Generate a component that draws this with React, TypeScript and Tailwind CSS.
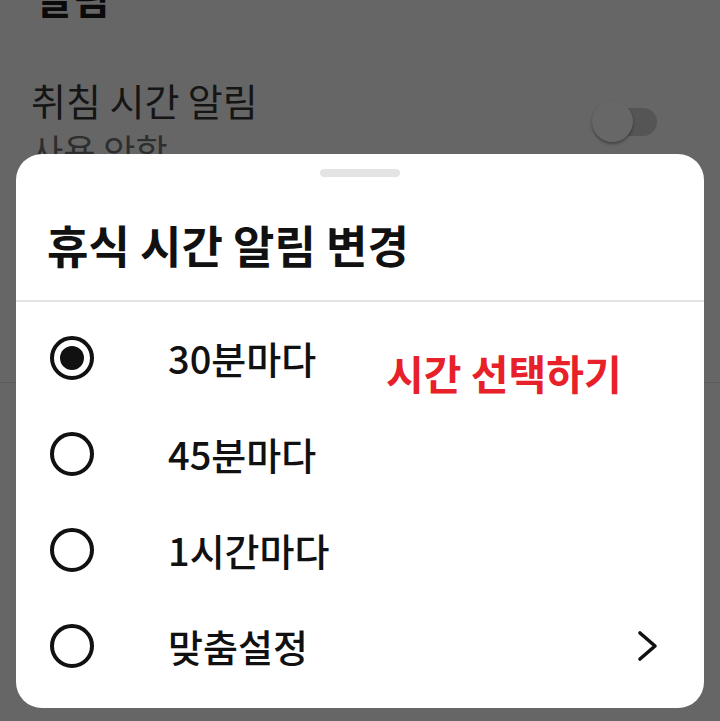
const options = [
  { label: "30분마다", checked: true },
  { label: "45분마다", checked: false },
  { label: "1시간마다", checked: false },
  { label: "맞춤설정", checked: false, more: true },
];

function Radio({ checked }: { checked: boolean }) {
  return (
    <span className="flex h-[44px] w-[44px] shrink-0 items-center justify-center rounded-full border-[4px] border-[#111]">
      {checked && <span className="h-[24px] w-[24px] rounded-full bg-[#111]" />}
    </span>
  );
}

function Chevron() {
  return (
    <svg width="24" height="32" viewBox="0 0 24 32" fill="none" className="shrink-0">
      <path d="M4 3 L19 16 L4 29" stroke="#111" strokeWidth="3.6" strokeLinecap="round" strokeLinejoin="round" />
    </svg>
  );
}

export default function App() {
  return (
    <div
      className="relative h-[721px] w-[720px] overflow-hidden bg-[#666666]"
      style={{ fontFamily: '"Noto Sans CJK KR", "Noto Sans", sans-serif' }}
    >
      {/* dimmed settings page behind */}
      <div className="absolute inset-0">
        <div className="mt-[-27px] pl-[36px] text-[40px] font-bold leading-[1.2] text-[#0a0a0a]">
          알림
        </div>
        <div className="mt-[56px] flex items-start justify-between pl-[31px] pr-[62px]">
          <div>
            <div className="text-[38px] leading-[1.2] text-[#151515]">취침 시간 알림</div>
            <div className="mt-[6px] text-[35px] leading-[1.2] text-[#2e2e2e]">사용 안함</div>
          </div>
          <div className="relative mt-[24px] h-[42px] w-[66px]">
            <span className="absolute left-[8px] top-[7px] h-[28px] w-[57px] rounded-full bg-[#555555]" />
            <span className="absolute left-0 top-0 h-[41px] w-[41px] rounded-full bg-[#676767] shadow-[0_2px_3px_rgba(0,0,0,0.35)]" />
          </div>
        </div>
        <div className="absolute left-0 right-0 top-[382px] h-px bg-[#5c5c5c]" />
      </div>

      {/* bottom sheet */}
      <div className="absolute left-[16px] right-[16px] top-[154px] h-[554px] rounded-[26px] bg-white">
        <div className="flex justify-center pt-[15px]">
          <span className="h-[8px] w-[80px] rounded-full bg-[#e4e4e4]" />
        </div>
        <div className="flex h-[123px] items-center pl-[31px] pt-[12px] text-[45px] font-bold leading-[1.2] text-[#111]">
          휴식 시간 알림 변경
        </div>
        <div className="h-[2px] bg-[#e3e3e3]" />
        <div className="pt-[8px]">
          {options.map((o) => (
            <div key={o.label} className="flex h-[96px] items-center pl-[34px] pr-[44px]">
              <Radio checked={o.checked} />
              <span className="ml-[74px] flex-1 text-[38px] font-medium leading-[1.2] text-[#111]">
                {o.label}
              </span>
              {o.more && <Chevron />}
            </div>
          ))}
        </div>
      </div>

      <div className="absolute left-[386px] top-[342px] text-[41px] font-bold leading-[1.5] text-[#e8202a]">
        시간 선택하기
      </div>
    </div>
  );
}
